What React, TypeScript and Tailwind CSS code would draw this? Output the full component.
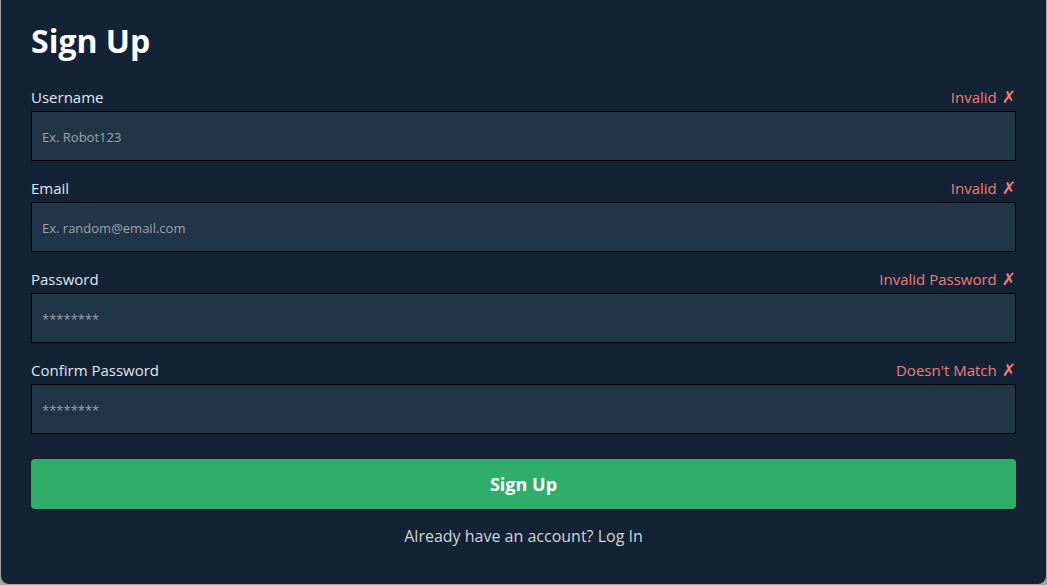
import React from "react";

const fields = [
  { label: "Username", placeholder: "Ex. Robot123", error: "Invalid", type: "text" },
  { label: "Email", placeholder: "Ex. random@email.com", error: "Invalid", type: "email" },
  { label: "Password", placeholder: "********", error: "Invalid Password", type: "password" },
  { label: "Confirm Password", placeholder: "********", error: "Doesn't Match", type: "password" },
];

export default function App() {
  return (
    <div
      className="w-[1047px] h-[585px] bg-[#a3a3a3] overflow-hidden"
      style={{ fontFamily: '"Open Sans", "Noto Sans", sans-serif' }}
    >
      <div className="ml-[1px] w-[1045px] h-[584px] bg-[#132234] rounded-b-[8px] pl-[30px] pr-[30px] pt-[21px]">
        <h1 className="text-[32px] leading-[40px] font-bold text-white mb-[24px]">Sign Up</h1>
        <form className="flex flex-col gap-[15px]" onSubmit={(e) => e.preventDefault()}>
          {fields.map((f) => (
            <div key={f.label} className="flex flex-col gap-[2px]">
              <div className="flex justify-between items-center h-[24px] text-[15px] leading-[22px]">
                <label className="text-[#e2e8f0]">{f.label}</label>
                <span className="text-[#f47b7b] flex items-center gap-[5px]">
                  {f.error}
                  <span
                    className="font-bold text-[17px] leading-[22px]"
                    style={{ fontFamily: '"DejaVu Sans", sans-serif' }}
                  >
                    ✗
                  </span>
                </span>
              </div>
              <input
                type="text"
                placeholder={f.placeholder}
                className="h-[50px] w-full bg-[#213548] border border-black pl-[10px] pt-[2px] text-[13px] text-white placeholder:text-[#9ba3ab] outline-none"
              />
            </div>
          ))}
          <button
            type="submit"
            className="mt-[10px] h-[50px] w-full rounded-[4px] bg-[#2fae6a] text-white font-bold text-[18px]"
          >
            Sign Up
          </button>
        </form>
        <p className="mt-[15px] text-center leading-[24px] text-[16px] text-[#d1d5db]">
          Already have an account? Log In
        </p>
      </div>
    </div>
  );
}
